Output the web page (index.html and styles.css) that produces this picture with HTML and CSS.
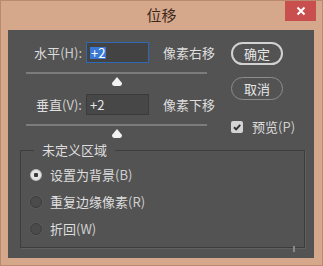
FILE: index.html
```html
<!DOCTYPE html>
<html lang="zh">
<head>
    <meta charset="UTF-8">
    <meta name="viewport" content="width=device-width, initial-scale=1">
    <title>位移</title>
    <link rel="stylesheet" href="styles.css">
</head>
<body>

<div class="window">
    <div class="titlebar">
        <span></span>
        <span class="title">位移</span>
        <button class="close">
            <svg width="10" height="10" viewBox="0 0 10 10"><path d="M1.5 1.5 L8.5 8.5 M8.5 1.5 L1.5 8.5" stroke="#fff" stroke-width="2"/></svg>
        </button>
    </div>
    <main class="content">
        <div class="top">
            <div class="fields">
                <div class="row">
                    <label class="lbl">水平<span class="lat">(H):</span></label>
                    <div class="field focus"><span class="sel">+2</span></div>
                    <span class="unit">像素右移</span>
                </div>
                <div class="track"></div>
                <svg class="thumb" width="10" height="9" viewBox="0 0 10 9"><path d="M5 0 L10 6 Q10 9 7.5 9 L2.5 9 Q0 9 0 6 Z" fill="#f2f2f2"/></svg>
                <div class="row">
                    <label class="lbl">垂直<span class="lat">(V):</span></label>
                    <div class="field"><span>+2</span></div>
                    <span class="unit">像素下移</span>
                </div>
                <div class="track"></div>
                <svg class="thumb" width="10" height="9" viewBox="0 0 10 9"><path d="M5 0 L10 6 Q10 9 7.5 9 L2.5 9 Q0 9 0 6 Z" fill="#f2f2f2"/></svg>
            </div>
            <div class="actions">
                <button class="btn primary">确定</button>
                <button class="btn">取消</button>
                <label class="check">
                    <span class="box"><svg width="12" height="12" viewBox="0 0 12 12"><path d="M3 6.2 L5.2 8.4 L9.2 3.8" stroke="#333" stroke-width="2" fill="none"/></svg></span>
                    预览<span class="lat">(P)</span>
                </label>
            </div>
        </div>
        <fieldset class="group">
            <legend>未定义区域</legend>
            <div class="radio on"><span class="dot"></span>设置为背景<span class="lat">(B)</span></div>
            <div class="radio"><span class="dot"></span>重复边缘像素<span class="lat">(R)</span></div>
            <div class="radio"><span class="dot"></span>折回<span class="lat">(W)</span></div>
        </fieldset>
        <div class="grip"></div>
    </main>
</div>

</body>
</html>
```
FILE: styles.css
```css
* {
    box-sizing: border-box;
}
body {
    margin: 0;
    font-family: "Noto Sans CJK SC", sans-serif;
    background-color: #d6a88b;
}
.window {
    width: 323px;
    height: 266px;
    background-color: #d6a88b;
    border: 1px solid #b98a6f;
}
.titlebar {
    display: grid;
    grid-template-columns: 1fr auto 1fr;
    height: 29px;
}
.title {
    font-size: 15px;
    line-height: 28px;
    color: #3b281d;
}
.close {
    justify-self: end;
    width: 31px;
    height: 20px;
    margin-right: 6px;
    padding: 0;
    border: none;
    background-color: #c94f4f;
    display: flex;
    align-items: center;
    justify-content: center;
}
.content {
    position: relative;
    margin: 0 8px 0 7px;
    height: 228px;
    background-color: #535353;
    color: #dedede;
    font-size: 13px;
    padding-top: 12px;
}
.lat {
    color: #cfcfcf;
}
.top {
    display: flex;
    padding-left: 18px;
}
.fields {
    width: 205px;
}
.row {
    display: flex;
    align-items: center;
    height: 21px;
}
.row + .track {
    margin-top: 9px;
}
.thumb + .row {
    margin-top: 8px;
}
.lbl {
    width: 60px;
    padding-right: 4px;
    text-align: right;
    white-space: nowrap;
}
.field {
    width: 63px;
    height: 21px;
    padding-left: 3px;
    background-color: #474747;
    border: 1px solid #3b3b3b;
    display: flex;
    align-items: center;
    color: #e6e6e6;
}
.field.focus {
    border-color: #2e69b6;
    background-color: #434343;
}
.sel {
    background-color: #3a78d6;
    color: #fff;
    line-height: 12px;
    padding: 0 1px;
}
.unit {
    margin-left: 14px;
    white-space: nowrap;
}
.track {
    width: 181px;
    height: 2px;
    background-color: #7c7c7c;
}
.thumb {
    display: block;
    margin-top: 3px;
    margin-left: 86px;
}
.actions {
    width: 52px;
    margin-left: 0;
    display: flex;
    flex-direction: column;
}
.btn {
    width: 52px;
    height: 23px;
    padding: 0;
    border-radius: 12px;
    border: 1px solid #8c8c8c;
    background-color: transparent;
    color: #e6e6e6;
    font-family: inherit;
    font-size: 13px;
}
.btn.primary {
    border: 2px solid #d2d2d2;
}
.btn + .btn {
    margin-top: 12px;
}
.check {
    display: flex;
    align-items: center;
    margin-top: 21px;
    white-space: nowrap;
    line-height: 12px;
}
.box {
    width: 12px;
    height: 12px;
    margin-right: 9px;
    border-radius: 2px;
    background-color: #d4d4d4;
    display: flex;
}
.group {
    margin: 4px 9px 0 12px;
    height: 106px;
    padding: 3px 0 0 9px;
    border: 1px solid #3d3d3d;
    box-shadow: 1px 1px 0 #606060;
}
.group legend {
    margin-left: 4px;
    padding: 0 8px;
    line-height: 16px;
}
.radio {
    display: flex;
    align-items: center;
    height: 27px;
}
.dot {
    width: 12px;
    height: 12px;
    margin-right: 8px;
    border-radius: 50%;
    background-color: #4b4b4b;
    border: 1px solid #3c3c3c;
    box-shadow: 0 0 0 1px #5a5a5a;
}
.radio.on .dot {
    background: radial-gradient(circle, #3a3a3a 0 2px, #e4e4e4 2.5px);
    border-color: #bdbdbd;
    box-shadow: none;
}
.grip {
    position: absolute;
    left: 285px;
    top: 216px;
    width: 2px;
    height: 6px;
    background-color: #8a8a8a;
}
```
